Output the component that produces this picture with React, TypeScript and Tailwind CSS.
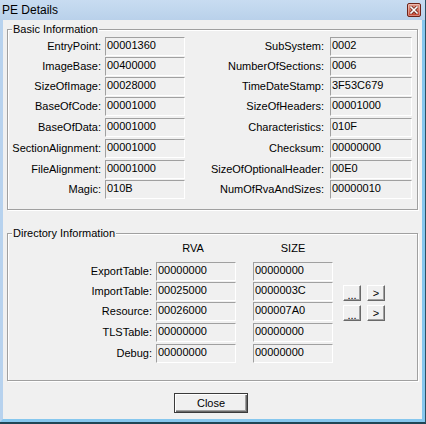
import React from "react";

const basicLeft: [string, string][] = [
  ["EntryPoint:", "00001360"],
  ["ImageBase:", "00400000"],
  ["SizeOfImage:", "00028000"],
  ["BaseOfCode:", "00001000"],
  ["BaseOfData:", "00001000"],
  ["SectionAlignment:", "00001000"],
  ["FileAlignment:", "00001000"],
  ["Magic:", "010B"],
];

const basicRight: [string, string][] = [
  ["SubSystem:", "0002"],
  ["NumberOfSections:", "0006"],
  ["TimeDateStamp:", "3F53C679"],
  ["SizeOfHeaders:", "00001000"],
  ["Characteristics:", "010F"],
  ["Checksum:", "00000000"],
  ["SizeOfOptionalHeader:", "00E0"],
  ["NumOfRvaAndSizes:", "00000010"],
];

const basicPitch = ["h-[20px]", "h-[20px]", "h-[20px]", "h-[21px]", "h-[21px]", "h-[21px]", "h-[20px]", "h-[19px]"];

const dirRows: { label: string; rva: string; size: string; buttons: boolean; h: string }[] = [
  { label: "ExportTable:", rva: "00000000", size: "00000000", buttons: false, h: "h-[20px]" },
  { label: "ImportTable:", rva: "00025000", size: "0000003C", buttons: true, h: "h-[20px]" },
  { label: "Resource:", rva: "00026000", size: "000007A0", buttons: true, h: "h-[21px]" },
  { label: "TLSTable:", rva: "00000000", size: "00000000", buttons: false, h: "h-[21px]" },
  { label: "Debug:", rva: "00000000", size: "00000000", buttons: false, h: "h-[19px]" },
];

function Field({ value, wide }: { value: string; wide?: boolean }) {
  return (
    <div
      className={`${wide ? "w-[82px]" : "w-[80px]"} h-[19px] shrink-0 border-t border-l border-t-[#a0a0a0] border-l-[#a0a0a0] border-b border-r border-b-white border-r-white pl-[1px] text-[11px] leading-[14px] text-black`}
    >
      {value}
    </div>
  );
}

function SmallButton({ children }: { children: React.ReactNode }) {
  return (
    <div className="w-[18px] h-[16px] shrink-0 flex items-center justify-center bg-[#f0f0f0] border border-t-white border-l-white border-b-[#696969] border-r-[#696969] shadow-[inset_-1px_-1px_0_#a0a0a0] text-[11px] leading-[12px] text-black">
      {children}
    </div>
  );
}

function GroupBox({
  title,
  className,
  children,
}: {
  title: string;
  className: string;
  children: React.ReactNode;
}) {
  return (
    <div
      className={`relative border border-[#a0a0a0] shadow-[inset_1px_1px_0_#ffffff,1px_1px_0_#ffffff] ${className}`}
    >
      <span className="absolute left-[4px] top-[-8px] px-[1px] bg-[#f0f0f0] text-[11px] leading-[14px] text-black whitespace-nowrap">
        {title}
      </span>
      {children}
    </div>
  );
}

export default function App() {
  return (
    <div
      className="w-[426px] h-[424px] flex flex-col bg-[#b9d3ee] border-r border-b-2 border-r-[#2a4f62] border-b-[#1f4656] overflow-hidden"
      style={{ fontFamily: '"Liberation Sans", Arial, sans-serif' }}
    >
      {/* Title bar */}
      <div className="h-[20px] shrink-0 flex items-center justify-between bg-gradient-to-b from-[#c8dcf1] to-[#b9d1ea] pl-[2px] pr-[4px]">
        <span className="text-[12px] leading-[14px] text-black">PE Details</span>
        <div className="w-[14px] h-[14px] rounded-[2px] border border-[#6e2318] bg-gradient-to-b from-[#e29a8c] to-[#c1412d] flex items-center justify-center shadow-[inset_0_0_0_1px_rgba(255,255,255,0.35)]">
          <svg width="8" height="8" viewBox="0 0 8 8">
            <path d="M1 1 L7 7 M7 1 L1 7" stroke="#5a1a12" strokeWidth="3" strokeLinecap="square" />
            <path d="M1 1 L7 7 M7 1 L1 7" stroke="#ffffff" strokeWidth="1.6" strokeLinecap="square" />
          </svg>
        </div>
      </div>

      {/* Client area */}
      <div className="flex-1 flex flex-col bg-[#f0f0f0] border-l-[3px] border-r-[3px] border-b-[3px] border-l-[#b7d2ee] border-r-[#86c7ee] border-b-[#86c7ee]">
        <GroupBox title="Basic Information" className="mt-[9px] ml-[4px] mr-[4px] h-[181px] pt-[7px]">
          <div className="flex flex-col">
            {basicLeft.map(([l, v], i) => (
              <div key={l} className={`${basicPitch[i]} shrink-0`}>
                <div className="flex items-center h-[19px]">
                  <div className="w-[93px] text-right text-[11px] leading-[13px] text-black whitespace-nowrap mt-[-1px]">{l}</div>
                  <div className="ml-[4px]">
                    <Field value={v} />
                  </div>
                  <div className="w-[139px] text-right text-[11px] leading-[13px] text-black whitespace-nowrap mt-[-1px]">
                    {basicRight[i][0]}
                  </div>
                  <div className="ml-[6px]">
                    <Field value={basicRight[i][1]} wide />
                  </div>
                </div>
              </div>
            ))}
          </div>
        </GroupBox>

        <GroupBox title="Directory Information" className="mt-[23px] ml-[4px] mr-[4px] h-[148px] pt-[7px]">
          <div className="flex h-[14px] mb-[7px] text-[11px] leading-[14px] text-black">
            <div className="w-[144px]" />
            <div className="ml-[4px] w-[80px] text-center pr-[6px]">RVA</div>
            <div className="ml-[17px] w-[80px] text-center">SIZE</div>
          </div>
          <div className="flex flex-col">
            {dirRows.map((r) => (
              <div key={r.label} className={`${r.h} shrink-0`}>
                <div className="flex items-center h-[19px]">
                  <div className="w-[144px] text-right text-[11px] leading-[13px] text-black whitespace-nowrap">{r.label}</div>
                  <div className="ml-[4px]">
                    <Field value={r.rva} />
                  </div>
                  <div className="ml-[17px]">
                    <Field value={r.size} />
                  </div>
                  {r.buttons && (
                    <div className="flex self-end gap-[6px] ml-[10px]">
                      <SmallButton>
                        <span className="mt-[4px]">...</span>
                      </SmallButton>
                      <SmallButton>&gt;</SmallButton>
                    </div>
                  )}
                </div>
              </div>
            ))}
          </div>
        </GroupBox>

        <div className="mt-[12px] ml-[171px] w-[74px] h-[20px] flex items-center justify-center bg-[#f0f0f0] border border-[#3a3a3a] shadow-[inset_1px_1px_0_#ffffff,inset_-1px_-1px_0_#696969,inset_-2px_-2px_0_#a0a0a0] text-[11px] leading-[13px] text-black">
          Close
        </div>
      </div>
    </div>
  );
}
